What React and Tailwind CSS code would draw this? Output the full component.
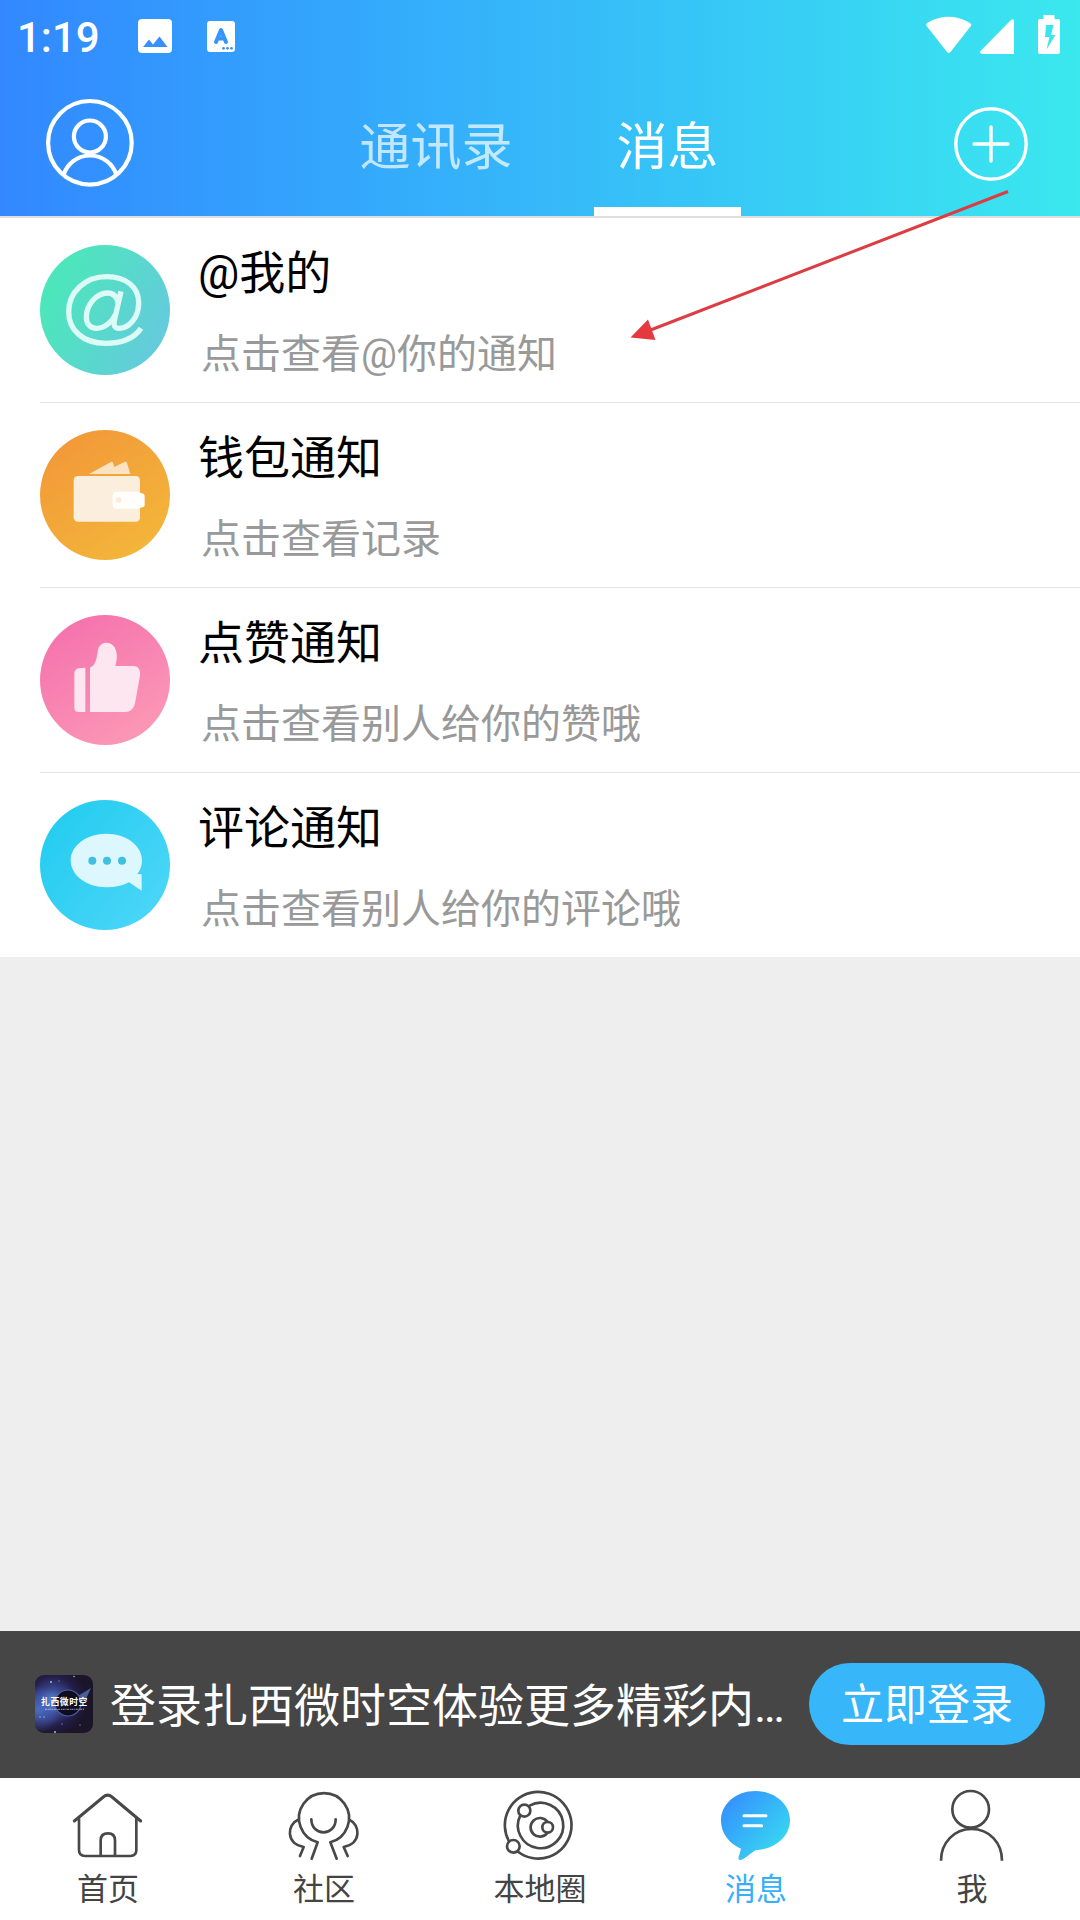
import React from "react";

const Stroke = ({ viewBox, children }) => (
  <svg viewBox={viewBox} className="h-[74px] w-[74px]" fill="none" stroke="#484848" strokeWidth="8" strokeLinecap="round" strokeLinejoin="round">
    {children}
  </svg>
);

const HomeIcon = () => (
  <Stroke viewBox="213 504 222 222">
    <path d="M223 603L310 531Q323 520 336 531L422 603" strokeWidth="9" />
    <path d="M237 596V690Q237 708 255 708H391Q409 708 409 690V596" />
    <path d="M302 706V661Q302 640 324 640Q345 640 345 661V706" />
  </Stroke>
);

const CommunityIcon = () => (
  <Stroke viewBox="861 504 222 222">
    <path d="M935 716L953 667A75 75 0 1 1 991 667L1010 716" />
    <path d="M934 598C934 650 1007 650 1007 598" />
    <path d="M893 600C862 613 856 670 911 681L900 708" />
    <path d="M1049 600C1080 613 1086 670 1031 681L1043 708" />
  </Stroke>
);

const LocalIcon = () => (
  <Stroke viewBox="309 504 222 222">
    <path d="M327 664A100 100 0 1 1 355 696" />
    <path d="M389 557A68 68 0 1 1 361 586" />
    <circle cx="373" cy="572" r="18" />
    <circle cx="340" cy="679" r="19" />
    <path d="M442 605A28 28 0 1 0 442 639" />
    <circle cx="443" cy="622" r="16" />
  </Stroke>
);

const MessageIcon = () => (
  <svg viewBox="57 504 222 222" className="h-[74px] w-[74px]">
    <defs>
      <linearGradient id="msg" x1="0" y1="0.1" x2="0.9" y2="0.9">
        <stop offset="0" stopColor="#348cff" />
        <stop offset="1" stopColor="#38dcf0" />
      </linearGradient>
    </defs>
    <path d="M166 513C224 513 270 552 270 601C270 650 224 689 168 690C154 697 142 712 124 719Q113 722 116 711L123 686C88 670 63 640 63 602C63 552 108 513 166 513Z" fill="url(#msg)" />
    <path d="M132 587H198M132 617H185" stroke="#fff" strokeWidth="9" strokeLinecap="round" />
  </svg>
);

const MeIcon = () => (
  <svg viewBox="705 504 222 222" className="h-[74px] w-[74px]" fill="none" stroke="#484848" strokeWidth="8">
    <circle cx="812" cy="568" r="55" />
    <path d="M723 722C723 668 762 627 815 627C868 627 906 668 906 722" />
  </svg>
);

const AtIcon = () => (
  <svg viewBox="120 75 390 390" className="h-[130px] w-[130px] shrink-0">
    <defs>
      <linearGradient id="at" x1="0" y1="0.3" x2="1" y2="0.8">
        <stop offset="0.1" stopColor="#4de6bc" />
        <stop offset="1" stopColor="#66c8df" />
      </linearGradient>
    </defs>
    <circle cx="315" cy="270" r="195" fill="url(#at)" />
    <g fill="none" stroke="#dcfaf6" strokeWidth="16">
      <path d="M423 325C402 356 364 370 318 370C248 370 206 330 206 275C206 215 256 170 320 170C378 170 416 201 416 248C416 294 386 325 357 325C343 325 340 315 343 302L363 214" />
      <path d="M355 249C350 228 340 219 323 219C287 219 259 257 259 291C259 312 271 325 289 325C318 325 339 300 346 285" />
    </g>
  </svg>
);

const WalletIcon = () => (
  <svg viewBox="120 630 390 390" className="h-[130px] w-[130px] shrink-0">
    <defs>
      <linearGradient id="wallet" x1="0.2" y1="0.1" x2="0.8" y2="0.95">
        <stop offset="0" stopColor="#f29a39" />
        <stop offset="1" stopColor="#f3b63a" />
      </linearGradient>
    </defs>
    <circle cx="315" cy="825" r="195" fill="url(#wallet)" />
    <path d="M267 762L333 726Q338 724 339 729L343 741L373 726Q379 723 381 729L391 762Z" fill="#fbe3c2" />
    <rect x="221" y="768" width="199" height="137" rx="13" fill="#fceedd" />
    <path d="M350 815H414L424 820Q434 820 434 830V855Q434 862 426 862L414 866H350Q338 866 338 854V827Q338 815 350 815Z" fill="#fffefc" />
    <circle cx="356" cy="840" r="8" fill="#f9ecd8" />
  </svg>
);

const LikeIcon = () => (
  <svg viewBox="120 75 390 390" className="h-[130px] w-[130px] shrink-0">
    <defs>
      <linearGradient id="like" x1="0.25" y1="0.1" x2="0.75" y2="0.9">
        <stop offset="0" stopColor="#f575ae" />
        <stop offset="1" stopColor="#fb96b5" />
      </linearGradient>
    </defs>
    <circle cx="315" cy="270" r="195" fill="url(#like)" />
    <path d="M256 233V366H236Q223 366 223 353V250Q223 236 240 234Z" fill="#fde6ef" />
    <path d="M270 366V233C290 225 290 200 294 181C298 150 342 150 349 185C352 200 350 215 346 228H402Q423 230 420 257L405 340Q399 366 376 366Z" fill="#fde6ef" />
  </svg>
);

const CommentIcon = () => (
  <svg viewBox="120 630 390 390" className="h-[130px] w-[130px] shrink-0">
    <defs>
      <linearGradient id="comment" x1="0.1" y1="0.2" x2="0.9" y2="0.8">
        <stop offset="0" stopColor="#26cdf0" />
        <stop offset="1" stopColor="#49d5f8" />
      </linearGradient>
    </defs>
    <circle cx="315" cy="825" r="195" fill="url(#comment)" />
    <path d="M319 731C379 731 426 767 426 811C426 827 421 841 412 852L425 853V902L387 877C368 887 345 892 319 892C260 892 212 856 212 811C212 767 260 731 319 731Z" fill="#dcf7fe" />
    <g fill="#3fbfe2">
      <circle cx="277" cy="812" r="12" />
      <circle cx="321" cy="812" r="12" />
      <circle cx="366" cy="812" r="12" />
    </g>
  </svg>
);

const Logo = () => (
  <svg viewBox="0 0 58 58" className="-mt-[2px] h-[58px] w-[58px] shrink-0 rounded-[9px]">
    <defs>
      <radialGradient id="glow" cx="0.3" cy="0.45" r="0.6">
        <stop offset="0" stopColor="#5f93d8" />
        <stop offset="0.35" stopColor="#3a468f" />
        <stop offset="0.7" stopColor="#241d48" />
        <stop offset="1" stopColor="#1a1528" />
      </radialGradient>
      <radialGradient id="haze" cx="0.05" cy="0.6" r="0.4">
        <stop offset="0" stopColor="#4a6cc4" />
        <stop offset="1" stopColor="#4a6cc4" stopOpacity="0" />
      </radialGradient>
    </defs>
    <rect width="58" height="58" fill="url(#glow)" />
    <rect width="58" height="58" fill="url(#haze)" />
    <path d="M38 24L56 13L51 24L40 30Z" fill="#5672b4" opacity="0.8" />
    <circle cx="33" cy="28" r="13" fill="#0f0c1f" stroke="#4c62a4" strokeWidth="1.2" />
    <g fill="#a9b8f0">
      <circle cx="16" cy="7" r="1" />
      <circle cx="24" cy="6" r="0.6" />
      <circle cx="39" cy="1.5" r="0.8" />
      <circle cx="5" cy="42" r="0.7" />
      <circle cx="9" cy="42" r="0.7" />
      <circle cx="20" cy="57" r="1" />
      <circle cx="45" cy="50" r="0.6" />
      <circle cx="27" cy="49" r="0.6" />
    </g>
    <text x="29.5" y="30.3" textAnchor="middle" fontSize="8.8" letterSpacing="0.6" fontWeight="700" fill="#fff" className="font-['Noto_Sans_CJK_SC']">扎西微时空</text>
    <path d="M10 34.3H49" stroke="#d5daf5" strokeWidth="0.9" strokeDasharray="2 0.8 1 0.6" opacity="0.8" />
  </svg>
);

const rows = [
  { title: "@我的", text: "点击查看@你的通知", Icon: AtIcon },
  { title: "钱包通知", text: "点击查看记录", Icon: WalletIcon },
  { title: "点赞通知", text: "点击查看别人给你的赞哦", Icon: LikeIcon },
  { title: "评论通知", text: "点击查看别人给你的评论哦", Icon: CommentIcon },
];

const nav = [
  { label: "首页", Icon: HomeIcon },
  { label: "社区", Icon: CommunityIcon },
  { label: "本地圈", Icon: LocalIcon },
  { label: "消息", Icon: MessageIcon, active: true },
  { label: "我", Icon: MeIcon },
];

const StatusBar = () => (
  <div className="flex h-[72px] items-center justify-between pl-[17px] pr-[19px] text-white">
    <div className="flex items-center">
      <span className="w-[121px] pt-[3px] text-[42px] font-medium leading-[69px]">1:19</span>
      <svg viewBox="0 0 34 34" className="h-[34px] w-[34px]">
        <rect width="34" height="34" rx="4" fill="#fff" />
        <path d="M5 28L11 20.5L15 25.5L21.5 17.5L29.5 28Z" fill="#3690fd" />
      </svg>
      <svg viewBox="0 0 28 31" className="ml-[35px] h-[31px] w-[28px]">
        <rect width="28" height="31" rx="3" fill="#fff" />
        <path d="M9 21L14 9L19 21M10.5 17.500H17.500" fill="none" stroke="#3694fd" strokeWidth="4" strokeLinecap="round" strokeLinejoin="round" />
        <g fill="#3694fd">
          <circle cx="16.5" cy="27.3" r="1.4" />
          <circle cx="20.5" cy="27.3" r="1.4" />
          <circle cx="24.5" cy="27.3" r="1.4" />
        </g>
      </svg>
    </div>
    <svg viewBox="925 15 136 42" className="h-[42px] w-[136px]" fill="#fff">
      <path d="M927 26.500Q925 24.500 927.500 22.700Q948.500 11 969.500 22.700Q972.500 24.500 970.500 26.500L950.500 52Q948.700 54 947 52Z" />
      <path d="M1014 21V54H983Q978.500 53.500 981 50.500L1010.500 20.500Q1013.500 18 1014 21Z" />
      <path d="M1043.500 15H1054.500V19H1058Q1060 19 1060 21V52Q1060 54 1058 54H1040Q1038 54 1038 52V21Q1038 19 1040 19H1043.500ZM1046 25L1045 37H1049.500L1046.500 49.500L1055.500 35H1051L1053.500 25Z" fillRule="evenodd" />
    </svg>
  </div>
);

export default function App() {
  return (
    <div className="relative flex h-[1920px] w-[1080px] flex-col overflow-hidden bg-[#eeeeee] font-['Roboto','Noto_Sans_CJK_SC',sans-serif]">
      <header className="h-[216px] shrink-0 bg-linear-to-r from-[#3388ff] via-[#36b8f9] to-[#3be8ee]">
        <StatusBar />
        <div className="flex h-[144px] pl-[45px] pr-[51px]">
          <svg viewBox="0 0 90 90" className="mt-[26px] h-[90px] w-[90px]" fill="none" stroke="#fff" strokeWidth="4.200">
            <circle cx="44.900" cy="44.800" r="41.800" />
            <circle cx="44.900" cy="38.500" r="16" />
            <path d="M18.500 77C22 66 32 57.500 45 57.500C58 57.500 68 66 71.500 77" />
          </svg>
          <div className="ml-[202px] flex h-[144px] w-[198px] items-center justify-center text-[51px] leading-none text-white/70">
            <span className="mt-[6px]">通讯录</span>
          </div>
          <div className="ml-[59px] flex h-[144px] w-[147px] items-center justify-center border-b-[9px] border-white pt-[9px] text-[51px] leading-none text-white">
            <span className="mt-[6px]">消息</span>
          </div>
          <svg viewBox="0 0 76 76" className="ml-auto mt-[34px] h-[76px] w-[76px]" fill="none" stroke="#fff" strokeWidth="3.400" strokeLinecap="round">
            <circle cx="38" cy="38" r="35.200" />
            <path d="M38 21V55M21 38H55" />
          </svg>
        </div>
      </header>

      <main className="border-t-2 border-[#dfdfdf] bg-white">
        {rows.map(({ title, text, Icon }, i) => (
          <div key={title} className={i < 3 ? "ml-[40px] flex h-[185px] border-b border-[#e4e4e4] pt-[27px]" : "ml-[40px] flex h-[184px] pt-[27px]"}>
            <Icon />
            <div className="ml-[28px] flex flex-col">
              <span className="-mt-[2px] h-[60px] whitespace-nowrap text-[46px] leading-[60px] text-black">{title}</span>
              <span className="mt-[22px] h-[60px] whitespace-nowrap pl-[3px] text-[40px] leading-[60px] text-[#999]">{text}</span>
            </div>
          </div>
        ))}
      </main>

      <footer className="mt-auto">
        <div className="flex h-[147px] items-center bg-[#464646] pl-[35px] pr-[35px] text-white">
          <Logo />
          <span className="ml-[17px] w-[699px] whitespace-nowrap pt-[2px] text-[46px] leading-[60px]">登录扎西微时空体验更多精彩内…</span>
          <button className="-mt-[2px] flex h-[82px] w-[236px] items-center justify-center rounded-[41px] bg-[#37b6fa] pt-[4px] text-[43px] leading-none">立即登录</button>
        </div>
        <nav className="grid h-[142px] grid-cols-5 bg-white">
          {nav.map(({ label, Icon, active }) => (
            <div key={label} className="flex flex-col items-center pt-[10px]">
              <Icon />
              <span className={active ? "mt-[8px] text-[31px] leading-[40px] text-[#37b0f8]" : "mt-[8px] text-[31px] leading-[40px] text-[#444]"}>{label}</span>
            </div>
          ))}
        </nav>
      </footer>

      <svg viewBox="628 188 384 156" className="absolute left-[628px] top-[188px] h-[156px] w-[384px]">
        <path d="M1008 191.500L648 331" stroke="#dc3c42" strokeWidth="3" />
        <path d="M630.500 337.500L648 319.500L655.500 340Z" fill="#e43a3f" />
      </svg>
    </div>
  );
}
